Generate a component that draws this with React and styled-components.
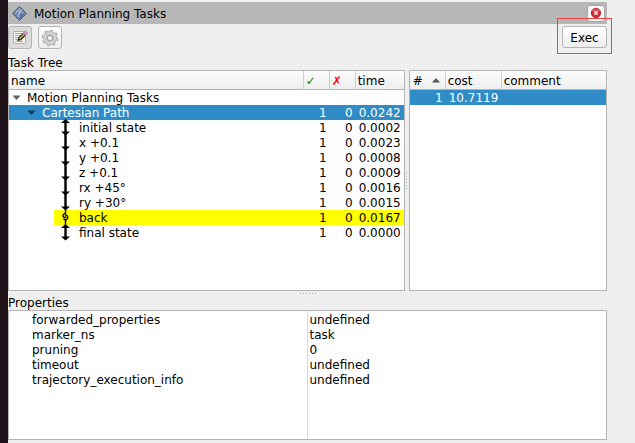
import React from "react";
import styled, { createGlobalStyle, css } from "styled-components";

const Global = createGlobalStyle`
  * { box-sizing: border-box; }
  body {
    margin: 0;
    background: #efefef;
    color: #000;
    font: 12px/15px "DejaVu Sans", sans-serif;
  }
  button { font: inherit; color: inherit; }
`;

const Screen = styled.div`
  min-height: 100vh;
  display: flex;
  border-left: 8px solid #20131a;
`;

const Dock = styled.main`
  flex: 1;
  min-width: 0;
  display: flex;
  flex-direction: column;
  padding: 2px 28px 3px 0;
`;

const TitleBar = styled.header`
  height: 22px;
  display: flex;
  align-items: center;
  gap: 7px;
  padding: 0 2px 0 4px;
  background: #b7b7b7;
`;

const Title = styled.h1`
  flex: 1;
  margin: 0;
  padding-top: 2px;
  font-size: 12px;
  font-weight: normal;
`;

const Button = styled.button`
  display: flex;
  align-items: center;
  justify-content: center;
  padding: 0;
  border: 1px solid #b4b4b4;
  border-radius: 3px;
  background: linear-gradient(#fefefe, #eeeeee);
`;

const CloseButton = styled(Button)`
  width: 18px;
  height: 17px;
  border-color: #a4a4a4;
  background: #fafafa;
`;

const ToolButton = styled(Button)`
  width: 24px;
  height: 23px;
  ${(p) => p.$pressed && css`background: #dcdcdc;`}
`;

const ExecButton = styled(Button)`
  width: 45px;
  height: 22px;
  padding-top: 2px;
`;

const Toolbar = styled.div`
  display: flex;
  align-items: flex-start;
  gap: 6px;
  height: 31px;
  padding-top: 2px;
`;

const ExecArea = styled.div`
  position: relative;
  margin-left: auto;
`;

const Highlight = styled.div`
  position: absolute;
  inset: -8px -5px -6px;
  border: 1px solid #f54343;
  pointer-events: none;
`;

const SectionTitle = styled.h2`
  margin: 0;
  height: 15px;
  padding-top: 1px;
  font-size: 12px;
  line-height: 15px;
  font-weight: normal;
`;

const Splitter = styled.div`
  flex: 1;
  display: grid;
  grid-template-columns: 2fr 4px 1fr;
`;

const Panel = styled.div`
  min-width: 0;
  border: 1px solid #b4b4b4;
  background: #fff;
`;

const PropertyPanel = styled(Panel)`
  min-height: 130px;
  display: flex;
  padding-top: 1px;
  background: linear-gradient(#d8d8d8, #d8d8d8) 50% 0 / 1px 100% no-repeat #fff;
`;

const Grip = styled.div`
  display: flex;
  flex-direction: ${(p) => (p.$vertical ? "column" : "row")};
  align-items: center;
  justify-content: center;
  gap: 2px;
  height: ${(p) => (p.$vertical ? "auto" : "4px")};
  i { width: 1px; height: 1px; background: #a8a8a8; }
`;

const Table = styled.table`
  width: 100%;
  table-layout: fixed;
  border-collapse: separate;
  border-spacing: 0;
`;

const Col = styled.col`
  width: ${(p) => p.$w};
`;

const Head = styled.th`
  height: 19px;
  padding: 2px 2px 0;
  text-align: left;
  font-weight: normal;
  color: ${(p) => p.$color || "#000"};
  background: linear-gradient(#fdfdfd, #eeeeee);
  border-bottom: 1px solid #b4b4b4;
  border-right: 1px solid #cfcfcf;
  &:last-child { border-right: 0; }
`;

const HeadContent = styled.span`
  display: flex;
  justify-content: space-between;
  align-items: flex-start;
  padding: 0 3px 0 1px;
  svg { margin-top: 4px; }
`;

const Row = styled.tr`
  height: 15px;
  line-height: 13px;
  ${(p) => p.$selected && css`background: #308cc6; color: #fff;`}
`;

const Cell = styled.td`
  padding: 2px 3px 0;
  text-align: ${(p) => p.$align || "left"};
  white-space: nowrap;
  ${(p) => p.$warn && css`background: #ffff00;`}
`;

const NameCell = styled(Cell)`
  padding: 0 0 0 ${(p) => p.$depth * 15}px;
`;

const NameContent = styled.div`
  display: flex;
  align-items: center;
  height: 15px;
  gap: ${(p) => (p.$leaf ? "6px" : "3px")};
  padding-left: ${(p) => (p.$leaf ? "4px" : "0")};
  ${(p) => p.$warn && css`background: #ffff00;`}
  span { padding-top: 2px; }
`;

const PropertyTable = styled(Table)`
  align-self: flex-start;
  td { padding-left: 2px; }
  td:first-child { padding-left: 23px; }
`;

const Diamond = () => (
  <svg width="15" height="15" viewBox="0 0 15 15" aria-hidden="true">
    <path d="M7.5 .7 14.3 7.5 7.5 14.3 .7 7.5Z" fill="#7089b4" stroke="#3c4f74" />
    <path d="M7.5 2 13 7.5 7.5 8.5 2 7.5Z" fill="#8298c0" />
    <path d="M8 8 13 7.5 8 13Z" fill="#5b72a0" />
    <path d="M4 6 8 2.5M6 11 8 5 10 4" stroke="#b4c2dc" fill="none" />
  </svg>
);

const CloseIcon = () => (
  <svg width="12" height="12" viewBox="0 0 12 12" aria-hidden="true">
    <circle cx="6" cy="6" r="4.7" fill="#cf2a2f" stroke="#a9282c" />
    <path d="M2 4.5a4.2 4.2 0 0 1 8 0Z" fill="#dc5257" />
    <path d="m4.3 4.3 3.4 3.4m0-3.4L4.3 7.7" stroke="#f8e4e4" strokeWidth="1.5" />
  </svg>
);

const EditIcon = () => (
  <svg width="17" height="17" viewBox="0 0 17 17" aria-hidden="true">
    <path d="M1.5 2.5h12v12h-12z" fill="#fafafa" stroke="#b0b0b0" />
    <path d="M3 4.5h7M3 6.5h6M3 8.5h4M3 10.5h3M3 12.5h8" stroke="#aaa" />
    <path d="m5.2 12.3 1-3 2 2Z" fill="#222" />
    <path d="m7.2 10.3 5-5" stroke="#222" strokeWidth="3.8" />
    <path d="m7.6 9.8 4.4-4.4" stroke="#e6c945" strokeWidth="1.4" />
    <path d="m12 5.5 1.4-1.4" stroke="#999" strokeWidth="3.8" />
    <path d="m13.2 4.3 1.6-1.6" stroke="#d88ac4" strokeWidth="3.8" />
  </svg>
);

const GearIcon = () => (
  <svg width="18" height="18" viewBox="0 0 18 18" aria-hidden="true">
    <circle cx="9" cy="9" r="7.2" fill="none" stroke="#a3a3a3" strokeWidth="2.2" strokeDasharray="2.8 2.855" />
    <circle cx="9" cy="9" r="4.7" fill="none" stroke="#a3a3a3" strokeWidth="4.4" />
    <circle cx="9" cy="9" r="4.9" fill="none" stroke="#d4d4d4" strokeWidth="2.6" />
    <circle cx="9" cy="9" r="6.8" fill="none" stroke="#d0d0d0" strokeWidth="1.4" strokeDasharray="1.6 3.741" strokeDashoffset="-.6" />
    <circle cx="9" cy="9" r="2.6" fill="#f4f4f4" stroke="#a3a3a3" />
  </svg>
);

const Expander = ({ selected }) => (
  <svg width="15" height="15" viewBox="0 0 15 15" aria-hidden="true">
    <path d="M3.5 5.5h8l-4 4.5Z" fill={selected ? "#143c58" : "#606060"} />
  </svg>
);

const SortArrow = () => (
  <svg width="8" height="5" viewBox="0 0 8 5" aria-hidden="true">
    <path d="M0 4.5 4 0l4 4.5Z" fill="#555" />
  </svg>
);

const flowPaths = {
  both: { line: "M7.5 1v13", heads: "M3 3 7.5-1 12 3ZM3 11.5h9l-4.5 4Z" },
  down: { line: "M7.5-1v14", heads: "M3 11.5h9l-4.5 4Z" },
  wave: { line: "M7.5-1v4.5Q4.500 4 5 6T8 7M7 5Q10.500 5.500 9.500 8T7.500 10.500V15M5.500 9 8 10", heads: "" },
};

const FlowIcon = ({ kind }) => (
  <svg width="15" height="15" viewBox="0 0 15 15" overflow="visible" aria-hidden="true">
    <path d={flowPaths[kind].line} stroke="#000" strokeWidth={kind === "wave" ? 1.4 : 2.4} fill="none" />
    <path d={flowPaths[kind].heads} fill="#000" />
  </svg>
);

const Dots = ({ vertical }) => (
  <Grip $vertical={vertical}>
    {[0, 1, 2, 3, 4, 5].map((n) => <i key={n} />)}
  </Grip>
);

const stages = [
  { name: "initial state", time: "0.0002", flow: "both" },
  { name: "x +0.1", time: "0.0023", flow: "down" },
  { name: "y +0.1", time: "0.0008", flow: "down" },
  { name: "z +0.1", time: "0.0009", flow: "down" },
  { name: "rx +45°", time: "0.0016", flow: "down" },
  { name: "ry +30°", time: "0.0015", flow: "down" },
  { name: "back", time: "0.0167", flow: "wave", warn: true },
  { name: "final state", time: "0.0000", flow: "both" },
];

const properties = [
  ["forwarded_properties", "undefined"],
  ["marker_ns", "task"],
  ["pruning", "0"],
  ["timeout", "undefined"],
  ["trajectory_execution_info", "undefined"],
];

const TaskTree = () => (
  <Table aria-label="Task Tree">
    <colgroup>
      <Col />
      <Col $w="26px" />
      <Col $w="26px" />
      <Col $w="48px" />
    </colgroup>
    <thead>
      <tr>
        <Head>name</Head>
        <Head $color="#008000">✓</Head>
        <Head $color="#ff0000">✗</Head>
        <Head>time</Head>
      </tr>
    </thead>
    <tbody>
      <Row>
        <NameCell $depth={0} colSpan={4}>
          <NameContent><Expander /><span>Motion Planning Tasks</span></NameContent>
        </NameCell>
      </Row>
      <Row $selected>
        <NameCell $depth={1}>
          <NameContent><Expander selected /><span>Cartesian Path</span></NameContent>
        </NameCell>
        <Cell $align="right">1</Cell>
        <Cell $align="right">0</Cell>
        <Cell $align="right">0.0242</Cell>
      </Row>
      {stages.map((s) => (
        <Row key={s.name}>
          <NameCell $depth={3}>
            <NameContent $leaf $warn={s.warn}><FlowIcon kind={s.flow} /><span>{s.name}</span></NameContent>
          </NameCell>
          <Cell $align="right" $warn={s.warn}>1</Cell>
          <Cell $align="right" $warn={s.warn}>0</Cell>
          <Cell $align="right" $warn={s.warn}>{s.time}</Cell>
        </Row>
      ))}
    </tbody>
  </Table>
);

const Solutions = () => (
  <Table aria-label="Solutions">
    <colgroup>
      <Col $w="36px" />
      <Col $w="56px" />
      <Col />
    </colgroup>
    <thead>
      <tr>
        <Head><HeadContent>#<SortArrow /></HeadContent></Head>
        <Head>cost</Head>
        <Head>comment</Head>
      </tr>
    </thead>
    <tbody>
      <Row $selected>
        <Cell $align="right">1</Cell>
        <Cell>10.7119</Cell>
        <Cell />
      </Row>
    </tbody>
  </Table>
);

export default function App() {
  return (
    <>
      <Global />
      <Screen>
        <Dock>
          <TitleBar>
            <Diamond />
            <Title>Motion Planning Tasks</Title>
            <CloseButton aria-label="Close"><CloseIcon /></CloseButton>
          </TitleBar>
          <Toolbar>
            <ToolButton $pressed aria-label="Edit" aria-pressed="true"><EditIcon /></ToolButton>
            <ToolButton aria-label="Settings"><GearIcon /></ToolButton>
            <ExecArea>
              <ExecButton>Exec</ExecButton>
              <Highlight />
            </ExecArea>
          </Toolbar>
          <SectionTitle>Task Tree</SectionTitle>
          <Splitter>
            <Panel><TaskTree /></Panel>
            <Dots vertical />
            <Panel><Solutions /></Panel>
          </Splitter>
          <Dots />
          <SectionTitle>Properties</SectionTitle>
          <PropertyPanel>
            <PropertyTable aria-label="Properties">
              <tbody>
                {properties.map(([name, value]) => (
                  <Row key={name}>
                    <Cell>{name}</Cell>
                    <Cell>{value}</Cell>
                  </Row>
                ))}
              </tbody>
            </PropertyTable>
          </PropertyPanel>
        </Dock>
      </Screen>
    </>
  );
}
